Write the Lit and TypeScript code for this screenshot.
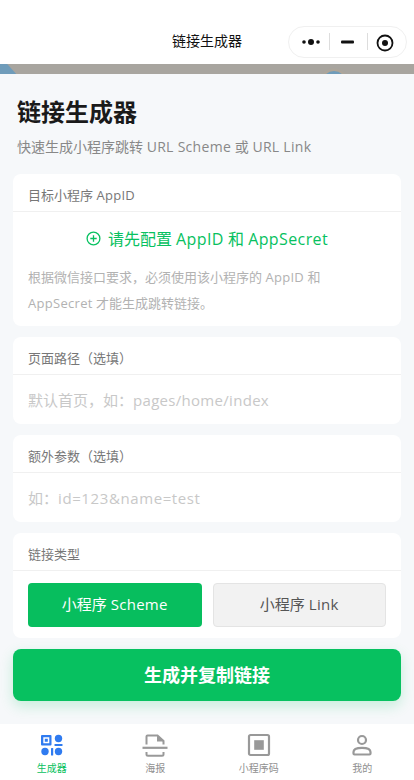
import { LitElement, html, css } from "lit";
import { customElement } from "lit/decorators.js";

@customElement("app-root")
export class AppRoot extends LitElement {
  static styles = css`
    :host { display: block; width: 414px; height: 780px; overflow: hidden; background: #f6f8fa; position: relative;
      font-family: "Open Sans", "Noto Sans CJK SC", sans-serif; }
    .l { letter-spacing: .3px; }
    .l2 { letter-spacing: .6px; }
    .nav { height: 64px; background: #fff; display: flex; align-items: center; justify-content: center; position: relative; box-sizing: border-box; padding-top: 18px; }
    .nav-title { font-size: 14px; color: #111; line-height: 20px; }
    .capsule { position: absolute; left: 288px; top: 26px; width: 119px; height: 32px; box-sizing: border-box; border: 1px solid #f0f0f0; border-radius: 16px; display: flex; align-items: center; }
    .strip { height: 10px; background: #a8a59f; position: relative; overflow: hidden; }
    .strip i { position: absolute; display: block; background: #6f9cba; }
    .s1 { left: -6px; top: 0; width: 22px; height: 14px; clip-path: polygon(0 0, 60% 0, 100% 70%, 100% 100%, 0 100%); }
    .s2 { left: 322px; top: 7px; width: 24px; height: 24px; border-radius: 50%; box-shadow: 0 0 3px 1px #b5a793; }
    main { padding: 0 13px; display: flex; flex-direction: column; }
    h1 { margin: 23px 0 0 4px; font-size: 24px; line-height: 30px; font-weight: 700; color: #1a1a1a; }
    .sub { margin: 10px 0 0 4px; font-size: 14px; line-height: 20px; color: #888; }
    .card { background: #fff; border-radius: 8px; margin-top: 11px; }
    .first { margin-top: 17px; }
    .label { height: 38px; box-sizing: border-box; padding: 3px 15px 0; display: flex; align-items: center; font-size: 13px; color: #777; border-bottom: 1px solid #f0f0f0; white-space: pre; }
    .cfg { display: flex; align-items: center; justify-content: center; gap: 7px; height: 52px; color: #07c160; font-size: 16px; box-sizing: border-box; padding-bottom: 1px; white-space: pre; }
    .cfg .l { letter-spacing: .4px; }
    .cfg svg { margin-top: 2px; }
    .hint { padding: 0 15px 10px; font-size: 13px; line-height: 26px; color: #b2b2b2; }
    .ph { height: 49px; box-sizing: border-box; padding: 0 15px 1px; display: flex; align-items: center; font-size: 15px; color: #c8c8c8; white-space: pre; }
    .types { display: flex; gap: 11px; padding: 12px 15px 11px; }
    .t { width: 174px; height: 44px; box-sizing: border-box; border-radius: 4px; display: flex; align-items: center; justify-content: center; font-size: 15px; padding-bottom: 3px; white-space: pre; }
    .on { background: #07be5e; color: #fff; }
    .off { background: #f2f2f2; color: #555; border: 1px solid #e4e4e4; }
    .go { margin-top: 11px; height: 52px; box-sizing: border-box; padding-bottom: 3px; border-radius: 8px; background: #07c160; color: #fff; font-size: 18px; font-weight: 700; display: flex; align-items: center; justify-content: center; box-shadow: 0 5px 14px rgba(7,193,96,.2); }
    .tabs { position: absolute; left: 0; right: 0; top: 724px; height: 56px; background: #fff; display: grid; grid-template-columns: repeat(4, 1fr); }
    .tab { display: flex; flex-direction: column; align-items: center; padding-top: 9px; font-size: 10px; line-height: 14px; color: #8f8f8f; }
    .tab svg { display: block; margin-bottom: 4px; }
    .tab.act { color: #07c160; }
  `;

  render() {
    return html`
      <div class="nav">
        <div class="nav-title">链接生成器</div>
        <div class="capsule">
          <svg width="117" height="30" viewBox="0 0 117 30">
            <circle cx="15" cy="15" r="1.800" fill="#111"/><circle cx="22" cy="15" r="3" fill="#111"/><circle cx="29" cy="15" r="1.800" fill="#111"/>
            <rect x="40" y="6" width="1" height="17" fill="#ddd"/>
            <rect x="52" y="13.500" width="13" height="3" rx="1" fill="#111"/>
            <rect x="78" y="6" width="1" height="17" fill="#ddd"/>
            <circle cx="96" cy="16" r="7.500" fill="none" stroke="#111" stroke-width="1.800"/><circle cx="96" cy="16" r="3" fill="#111"/>
          </svg>
        </div>
      </div>
      <div class="strip"><i class="s1"></i><i class="s2"></i></div>
      <main>
        <h1>链接生成器</h1>
        <div class="sub">快速生成小程序跳转 <span class="l">URL Scheme</span> 或 <span class="l">URL Link</span></div>
        <div class="card first">
          <div class="label"><span>目标小程序 <span class="l">AppID</span></span></div>
          <div class="cfg">
            <svg width="15" height="15" viewBox="0 0 15 15" fill="none" stroke="#07c160" stroke-width="1.300"><circle cx="7.500" cy="7.500" r="6.400"/><path d="M7.500 4.300v6.400M4.300 7.500h6.400"/></svg>
            <span>请先配置 <span class="l">AppID</span> 和 <span class="l">AppSecret</span></span>
          </div>
          <div class="hint">根据微信接口要求，必须使用该小程序的 <span class="l">AppID</span> 和<br><span class="l">AppSecret</span> 才能生成跳转链接。</div>
        </div>
        <div class="card"><div class="label">页面路径（选填）</div><div class="ph"><span>默认首页，如：<span class="l">pages/home/index</span></span></div></div>
        <div class="card"><div class="label">额外参数（选填）</div><div class="ph"><span>如：<span class="l2">id=123&name=test</span></span></div></div>
        <div class="card">
          <div class="label">链接类型</div>
          <div class="types"><div class="t on"><span>小程序 <span class="l">Scheme</span></span></div><div class="t off"><span>小程序 <span class="l">Link</span></span></div></div>
        </div>
        <div class="go">生成并复制链接</div>
      </main>
      <div class="tabs">
        <div class="tab act">
          <svg width="24" height="24" viewBox="0 0 24 24" fill="#2f7bf0">
            <path fill-rule="evenodd" d="M2 2h8.500a1 1 0 0 1 1 1v8.500a1 1 0 0 1-1 1H2a1 1 0 0 1-1-1V3a1 1 0 0 1 1-1zm1.300 2.200v6.100h6V4.200zM4.800 5.700h3v3h-3z"/>
            <circle cx="18.500" cy="5.500" r="3.700"/><rect x="14.500" y="11" width="8" height="2" rx=".5"/>
            <circle cx="5" cy="18.500" r="3.700"/><rect x="11" y="15" width="2.200" height="7.500" rx=".5"/><circle cx="18.500" cy="18.500" r="3.700"/>
          </svg>
          生成器
        </div>
        <div class="tab">
          <svg width="26" height="24" viewBox="0 0 26 24" fill="none" stroke="#999" stroke-width="2">
            <path d="M4.500 11.500V3.500a1 1 0 0 1 1-1h10l6 5.500v3.500"/><path d="M15 2.500l7 6h-7z" fill="#999" stroke="none"/>
            <path d="M0.500 14.800h25" stroke-width="2.200"/><path d="M4.500 19v2.300a1.500 1.500 0 0 0 1.500 1.500h14a1.500 1.500 0 0 0 1.500-1.500V19"/>
          </svg>
          海报
        </div>
        <div class="tab">
          <svg width="24" height="24" viewBox="0 0 24 24" fill="none" stroke="#999" stroke-width="2.200">
            <rect x="2" y="2" width="20" height="20" rx="1.500"/><rect x="7.200" y="7.200" width="9.600" height="9.600" fill="#999" stroke="none"/>
          </svg>
          小程序码
        </div>
        <div class="tab">
          <svg width="24" height="24" viewBox="0 0 24 24" fill="none" stroke="#999" stroke-width="2.200">
            <circle cx="12" cy="7" r="4"/><path d="M3.500 20.500v-1.500c0-2.800 3-4.200 8.500-4.200s8.500 1.400 8.500 4.200v1.500a1 1 0 0 1-1 1H4.500a1 1 0 0 1-1-1z"/>
          </svg>
          我的
        </div>
      </div>
    `;
  }
}
